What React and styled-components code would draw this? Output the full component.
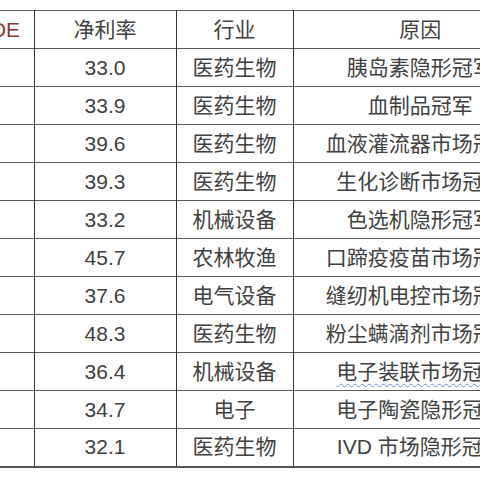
import React from "react";
import styled, { createGlobalStyle } from "styled-components";

const GlobalStyle = createGlobalStyle`
  html, body {
    margin: 0;
    padding: 0;
    background: #ffffff;
    overflow: hidden;
  }
  body {
    width: 480px;
    height: 480px;
  }
`;

const Page = styled.div`
  width: 480px;
  height: 480px;
  overflow: hidden;
  padding-top: 10px;
  box-sizing: border-box;
`;

const Table = styled.table`
  margin-left: -39px;
  border-collapse: collapse;
  table-layout: fixed;
  width: 586px;
  font-family: "Liberation Sans", "Noto Sans CJK SC", sans-serif;
  font-size: 21px;
  color: #404040;
  & col.roe { width: 73px; }
  & col.margin { width: 142px; }
  & col.industry { width: 117px; }
  & col.reason { width: 254px; }
`;

const Row = styled.tr`
  height: 38px;
  border-top: 1px solid #5a5a5a;
  &:last-child {
    border-bottom: 2px solid #555555;
  }
`;

const Cell = styled.td`
  padding: 0;
  text-align: center;
  vertical-align: middle;
  white-space: nowrap;
  overflow: hidden;
  border-left: 1px solid #333333;
  line-height: 36px;
  color: ${(p) => (p.$accent ? "#8b3535" : "#404040")};
  &:first-child {
    border-left: none;
  }
`;

const Marked = styled.span`
  text-decoration: underline wavy #5d8ee0;
  text-decoration-thickness: 1px;
  text-underline-offset: 4px;
`;

const rows = [
  { margin: "33.0", industry: "医药生物", reason: "胰岛素隐形冠军" },
  { margin: "33.9", industry: "医药生物", reason: "血制品冠军" },
  { margin: "39.6", industry: "医药生物", reason: "血液灌流器市场冠军" },
  { margin: "39.3", industry: "医药生物", reason: "生化诊断市场冠军" },
  { margin: "33.2", industry: "机械设备", reason: "色选机隐形冠军" },
  { margin: "45.7", industry: "农林牧渔", reason: "口蹄疫疫苗市场冠军" },
  { margin: "37.6", industry: "电气设备", reason: "缝纫机电控市场冠军" },
  { margin: "48.3", industry: "医药生物", reason: "粉尘螨滴剂市场冠军" },
  { margin: "36.4", industry: "机械设备", reason: "电子装联市场冠军", marked: true },
  { margin: "34.7", industry: "电子", reason: "电子陶瓷隐形冠军" },
  { margin: "32.1", industry: "医药生物", reason: "IVD 市场隐形冠军" },
];

export default function App() {
  return (
    <Page>
      <GlobalStyle />
      <Table>
        <colgroup>
          <col className="roe" />
          <col className="margin" />
          <col className="industry" />
          <col className="reason" />
        </colgroup>
        <tbody>
          <Row>
            <Cell $accent>ROE</Cell>
            <Cell>净利率</Cell>
            <Cell>行业</Cell>
            <Cell>原因</Cell>
          </Row>
          {rows.map((r) => (
            <Row key={r.reason}>
              <Cell />
              <Cell>{r.margin}</Cell>
              <Cell>{r.industry}</Cell>
              <Cell>{r.marked ? <Marked>{r.reason}</Marked> : r.reason}</Cell>
            </Row>
          ))}
        </tbody>
      </Table>
    </Page>
  );
}
